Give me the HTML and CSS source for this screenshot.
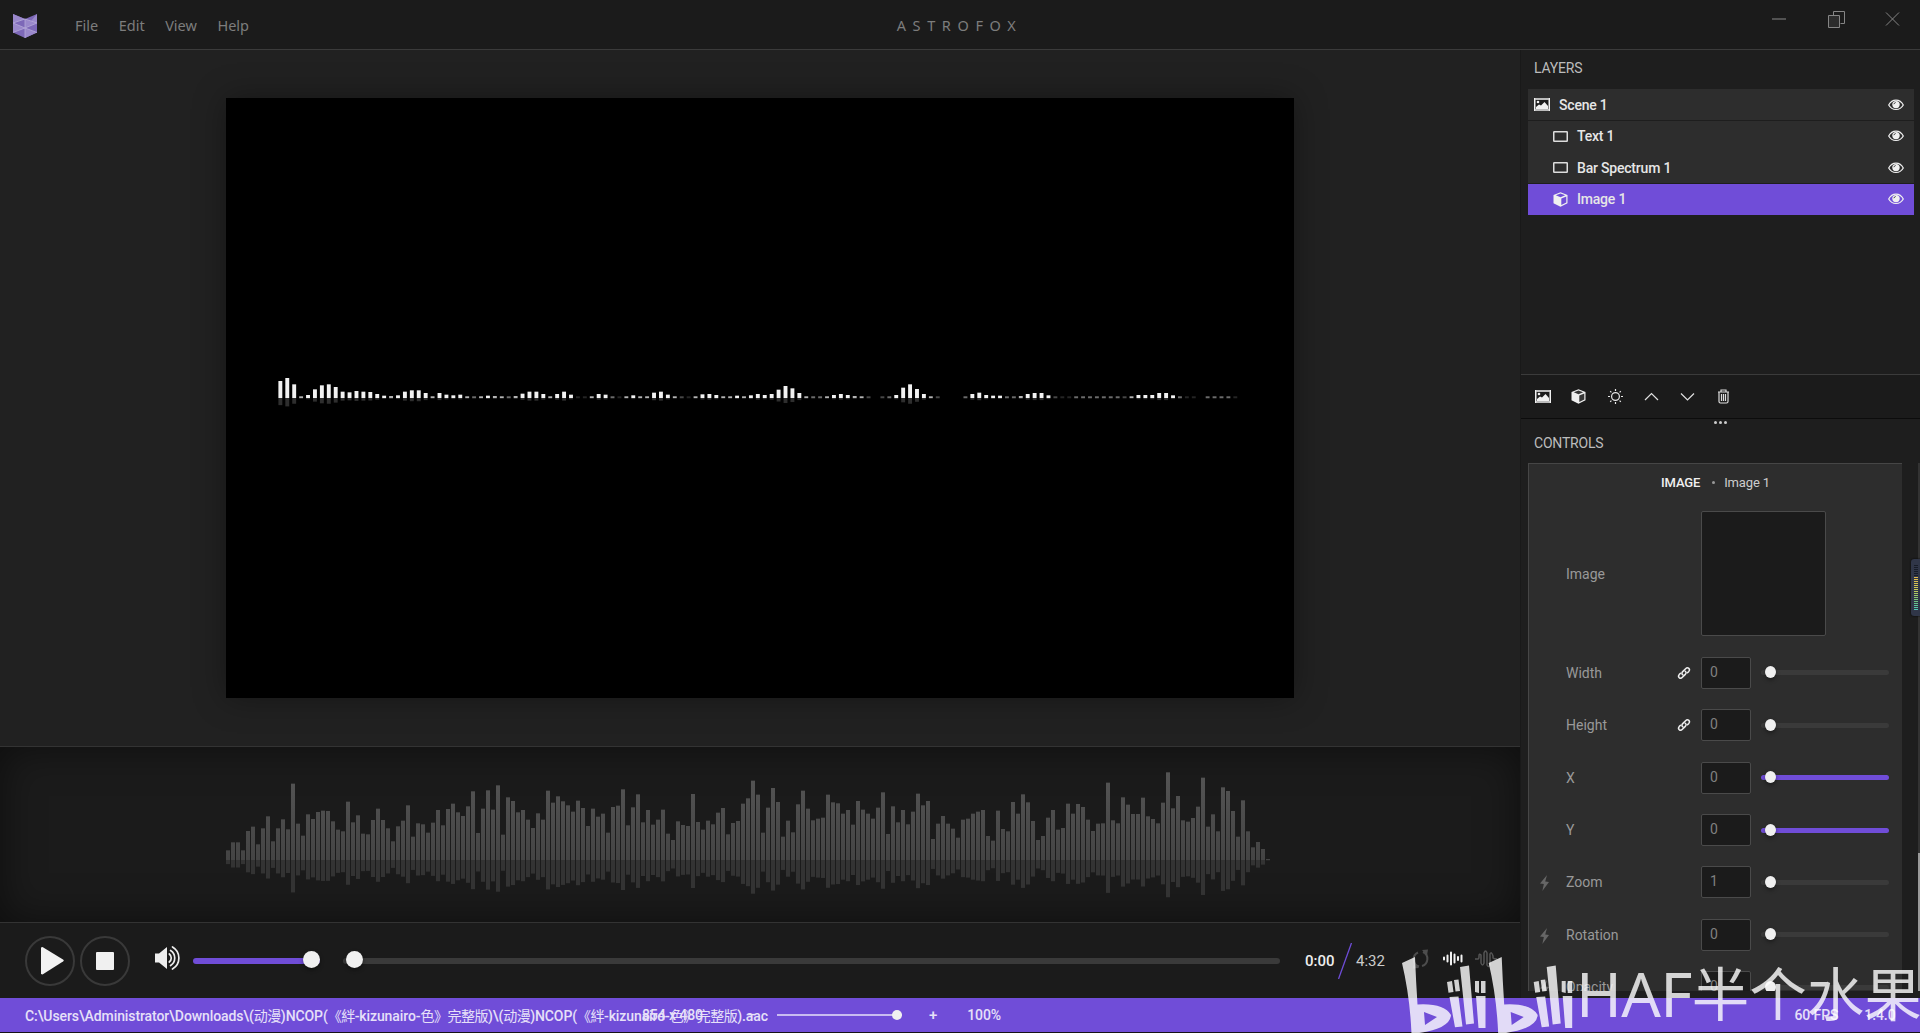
FILE: index.html
```html
<!DOCTYPE html>
<html lang="en">
<head>
<meta charset="utf-8">
<title>Astrofox</title>
<link rel="stylesheet" href="styles.css">
</head>
<body>
<svg class="defs" aria-hidden="true">
  <symbol id="picture" viewBox="0 0 16 13"><path fill="#bbb" d="M0 0h16v13H0z"/><path fill="#1c1c1c" d="M1.5 2h13v9h-13z"/><path fill="#f0f0f0" d="M0 0h1.2v13H0zM14.8 0H16v13h-1.200zM2 11V9l3-2.500 2 1L10.500 4 14 8v3z"/><circle cx="4" cy="4" r="1.300" fill="#f0f0f0"/></symbol>
  <symbol id="cube" viewBox="0 0 15 15"><path fill="#f0f0f0" d="M7.500.3 14.500 3v8.300L7.500 14.700.500 11.300V3z"/><path fill="#222" d="m7.500 1.500 4.700 1.800-4.700 1.900-4.700-1.900zM8.300 6.500 13.300 4.500v6.100l-5 2.500z" opacity=".9"/></symbol>
  <symbol id="cube-active" viewBox="0 0 15 15"><path fill="#f0f0f0" fill-rule="evenodd" d="M7.500.3 14.500 3v8.300L7.500 14.700.500 11.300V3zM7.500 1.500 2.800 3.300l4.700 1.900 4.700-1.900zM8.300 6.500v6.600l5-2.500V4.500z"/></symbol>
  <symbol id="rect" viewBox="0 0 15 11"><rect x=".75" y=".75" width="13.500" height="9.500" rx=".5" fill="none" stroke="#ddd" stroke-width="1.500"/></symbol>
  <symbol id="eye" viewBox="0 0 16 12"><path d="M.7 6C4-.5 12-.5 15.300 6 12 12 4 12 .7 6z" fill="none" stroke="#f0f0f0" stroke-width="1.200"/><circle cx="8" cy="5.600" r="3.700" fill="#f0f0f0"/><path d="M5.900 5.200Q6.200 3.700 7.700 3.500" stroke="#444" fill="none"/></symbol>
  <symbol id="link" viewBox="0 0 14 14"><g fill="none" stroke="#eee" stroke-width="1.500" stroke-linecap="round" stroke-linejoin="round"><path d="M6 9C4.600 8 4.600 6.700 5.700 5.600l2.900-2.900c1-1 2.300-1.100 3.200-.3.900.9.800 2.200-.1 3.200l-1.200 1.100"/><path d="M8 5c1.400 1 1.400 2.300.3 3.400l-2.900 2.900c-1 1-2.300 1.100-3.200.3-.9-.9-.8-2.200.1-3.200l1.200-1.100"/></g></symbol>
  <symbol id="bolt" viewBox="0 0 10 18"><path fill="#666" d="M7.800 0 0 9.500l4.300.6L2.600 18 10 8 5.800 7.300z"/></symbol>
</svg>
<div class="app">
  <header class="titlebar">
    <svg class="logo" viewBox="0 0 24 24"><path fill="#7d68b8" d="M0 0 12 5 24 0v18.500L12 24 0 18.500z"/><path fill="#9a88cb" d="M0 0 12 5 0 9zM0 9l12 5-12 4.500zM12 5l12 4-12 5zM24 0v9l-6-2zM12 24V14l12 4.500z"/><path fill="none" stroke="#b5a9d8" stroke-width=".8" d="m0 9 12-4v19M0 9l12 5 12-5-12-4M0 18.500 12 14l12 4.500"/></svg>
    <nav class="menu"><span>File</span><span>Edit</span><span>View</span><span>Help</span></nav>
    <div class="app-name">ASTROFOX</div>
    <svg class="window-buttons" viewBox="0 0 130 20" fill="none" stroke="#858585"><path d="M0 10h14" stroke="#666" stroke-width="1.500"/><path d="M61.500 6.500v-4h11v12h-4"/><path d="M56.500 6.500h11v12h-11z" fill="#2c2c2c"/><path d="m114 3.500 13 13m0-13-13 13"/></svg>
  </header>
  <div class="workspace">
    <main class="main">
      <section class="stage"><svg id="spectrum" class="canvas" viewBox="0 0 1068 600"></svg></section>
      <section class="waveform"><svg id="wave" viewBox="0 0 1068 130"><defs><linearGradient id="bars" x1="0" y1="0" x2="0" y2="92" gradientUnits="userSpaceOnUse"><stop offset="0" stop-color="#555"/><stop offset="1" stop-color="#444"/></linearGradient></defs></svg></section>
      <section class="player">
        <div class="round"><svg viewBox="0 0 23 28"><path fill="#f2f2f2" d="M0 .5 1.500 0 22 12.500q1.500 1 0 2L1.500 27.500 0 27z"/></svg></div>
        <div class="round"><i class="stop"></i></div>
        <svg class="speaker" viewBox="0 0 25 24"><path fill="#eee" d="M0 7.500h4L12 1v22l-8-6.500H0z"/><g fill="none" stroke="#eee" stroke-width="1.700" stroke-linecap="round"><path d="M14.300 8c2.600 2 2.600 6 0 8M15.600 4.500c5.500 3.500 5.500 11.500 0 15M17.500 1c8.500 5 8.500 17 0 22"/></g></svg>
        <div class="slider volume"><i></i></div>
        <div class="slider progress"><i></i></div>
        <div class="time">0:00</div>
        <svg class="slash" viewBox="0 0 14 36"><path d="M.5 36 13.500 0" stroke="#6f4dd8" stroke-width="1.300"/></svg>
        <div class="time total">4:32</div>
        <svg class="toggles" viewBox="0 0 86 20" fill="none"><g stroke="#4d4d4d" stroke-width="2"><path d="M7 17.500A7.500 7.500 0 0 1 6 3.500M11 3a7.500 7.500 0 0 1-1 14"/><path fill="#4d4d4d" stroke="none" d="m10 1 6-.5-1 6zM7 19l-6 .5 1-6z"/></g><path stroke="#f2f2f2" stroke-width="2" stroke-linecap="round" d="M32 8.500v2M35.500 6.500v6M39 3.500v12M42.500 5.500v8M46 8v3M49.500 6.500v6"/><path stroke="#555" stroke-width="1.500" d="M63 10h3q1 0 1-3t2-1v8q1.500 4 3 0V4q1.500-4 3 0v12q1.500 3 3 0V5q1.500-3 3 2v2q1 1 4 1"/></svg>
      </section>
    </main>
    <aside class="side">
      <h2>LAYERS</h2>
      <div class="layers">
        <div class="layer"><svg class="i-pic"><use href="#picture"/></svg><span>Scene 1</span><svg class="i-eye"><use href="#eye"/></svg></div>
        <div class="layer child"><svg class="i-rect"><use href="#rect"/></svg><span>Text 1</span><svg class="i-eye"><use href="#eye"/></svg></div>
        <div class="layer child"><svg class="i-rect"><use href="#rect"/></svg><span>Bar Spectrum 1</span><svg class="i-eye"><use href="#eye"/></svg></div>
        <div class="layer child active"><svg class="i-cube"><use href="#cube-active"/></svg><span>Image 1</span><svg class="i-eye"><use href="#eye"/></svg></div>
      </div>
      <div class="layer-tools">
        <svg class="i-pic"><use href="#picture"/></svg>
        <svg class="i-cube"><use href="#cube"/></svg>
        <svg class="i-tool" viewBox="0 0 15 15" fill="none" stroke="#e8e8e8" stroke-width="1.200"><circle cx="7.500" cy="7.500" r="3.900"/><path d="M7.500 0v2M7.500 13v2M0 7.500h2M13 7.500h2M2.200 2.200l1.200 1.200M11.600 11.600l1.200 1.200M12.800 2.200l-1.200 1.200M3.400 11.600l-1.200 1.200"/></svg>
        <svg class="i-tool" viewBox="0 0 15 15" fill="none" stroke="#e0e0e0" stroke-width="1.200"><path d="m1 11 6.500-6.500L14 11"/></svg>
        <svg class="i-tool" viewBox="0 0 15 15" fill="none" stroke="#e0e0e0" stroke-width="1.200"><path d="m1 4.500 6.500 6.500L14 4.500"/></svg>
        <svg class="i-tool" viewBox="0 0 15 15" fill="none" stroke="#ddd" stroke-width="1.200"><path d="M2 3h11M5 3V1h5v2M3 3v9.500q0 1.500 1.500 1.500h6q1.500 0 1.500-1.500V3M5.500 5v7M7.500 5v7M9.500 5v7"/></svg>
      </div>
      <div class="grip"><i></i><i></i><i></i></div>
      <h2 class="controls-title">CONTROLS</h2>
      <div class="controls">
        <div class="panel">
          <div class="panel-head"><b>IMAGE</b><i></i><span>Image 1</span></div>
          <div class="row image-row"><label>Image</label><div class="image-box"></div></div>
          <div class="row"><label>Width</label><svg class="link"><use href="#link"/></svg><div class="num">0</div><div class="slider small"><i></i></div></div>
          <div class="row"><label>Height</label><svg class="link"><use href="#link"/></svg><div class="num">0</div><div class="slider small"><i></i></div></div>
          <div class="row"><label>X</label><div class="num">0</div><div class="slider small full"><i></i></div></div>
          <div class="row"><label>Y</label><div class="num">0</div><div class="slider small full"><i></i></div></div>
          <div class="row"><svg class="bolt"><use href="#bolt"/></svg><label>Zoom</label><div class="num">1</div><div class="slider small"><i></i></div></div>
          <div class="row"><svg class="bolt"><use href="#bolt"/></svg><label>Rotation</label><div class="num">0</div><div class="slider small"><i></i></div></div>
          <div class="row"><svg class="bolt"><use href="#bolt"/></svg><label>Opacity</label><div class="num">0</div><div class="slider small"><i></i></div></div>
        </div>
        <div class="scroll"><i></i></div>
      </div>
    </aside>
  </div>
  <footer class="status">
    <div class="path">C:\Users\Administrator\Downloads\(<span>动漫</span>)NCOP(<span>《絆</span>-kizunairo-<span>色》完整版</span>)\(<span>动漫</span>)NCOP(<span>《絆</span>-kizunairo-<span>色》完整版</span>).aac</div>
    <div class="view"><span class="dims">854 x 480</span><span class="minus">–</span><div class="zoom"><i></i></div><span class="plus">+</span><span class="percent">100%</span></div>
    <div class="info"><span>60 FPS</span><span>1.4.0</span></div>
  </footer>
</div>
<div class="meter"><i></i></div>
<div class="watermark">
  <svg class="bili" viewBox="0 0 174 78" fill="#fff"><defs><g id="bili"><path fill-rule="evenodd" d="M0 6 13 0Q14 25 15.500 47.500 42 46 49 58 48 73 9.500 77 8 40 0 6zM22 55l1 13 12-8z"/><path d="m45 25 5-1 1.500 11-5 .8zM52 23l4.500-.5L58 34l-4.500.5zM47.500 40l9-.5 4 30-7.500.8zM58 10l9-1.500 5 58-8 1zM73 24h4v12l-4-1zM79 24h4.500v12H79zM74 39h9.500v32h-7z"/></g></defs><use href="#bili"/><use href="#bili" x="86.700"/></svg>
  <span class="latin">HAF</span><span class="han">半个水果</span>
</div>
<script src="script.js"></script>
</body>
</html>
```
FILE: styles.css
```css
* { box-sizing: border-box; }
body { margin: 0; width: 1920px; height: 1033px; overflow: hidden; position: relative; background: #161217; color: #ddd; font: 14px Roboto, "Noto Sans CJK SC", sans-serif; }
svg { display: block; flex: none; }
.defs { position: absolute; width: 0; height: 0; }
.app { height: 1032px; display: flex; flex-direction: column; }

.titlebar { flex: none; height: 50px; background: #1b1b1b; border-bottom: 1px solid #3b3b3b; display: grid; grid-template-columns: 75px 1fr auto 1fr; align-items: center; }
.logo { width: 24px; height: 24px; margin: 2px 0 0 13px; }
.menu { display: flex; gap: 20.500px; font: 14.500px "Noto Sans", sans-serif; color: #7d7d7d; }
.app-name { font: 14.500px "Noto Sans", sans-serif; letter-spacing: 6.600px; color: #7d7d7d; transform: translateX(-38px); }
.window-buttons { width: 130px; height: 20px; justify-self: end; margin: -12px 18px 0 0; }

.workspace { flex: 1; min-height: 0; display: flex; }
.main { width: 1520px; display: flex; flex-direction: column; }
.stage { flex: 1; display: flex; justify-content: center; align-items: center; background: #212121; }
.canvas { width: 1068px; height: 600px; background: #000; box-shadow: 0 0 30px rgba(0,0,0,.35); }
.waveform { height: 176px; background: #1b1b1b; border-top: 1px solid #333; box-shadow: inset 0 0 40px rgba(0,0,0,.5); padding: 21px 0 0 226px; }
.waveform svg { width: 1068px; height: 130px; }
.player { height: 76px; background: #1b1b1b; border-top: 1px solid #333; display: flex; align-items: center; padding-left: 25px; }
.round { width: 50px; height: 50px; border: 2px solid #393939; border-radius: 50%; margin-right: 5px; display: flex; align-items: center; justify-content: center; }
.round svg { width: 23px; height: 28px; margin-left: 5px; }
.stop { width: 18px; height: 18px; background: #f0f0f0; border-radius: 1px; }
.speaker { width: 25px; height: 24px; margin: -5px 13px 0 20px; }
.slider { height: 6px; border-radius: 3px; background: #3a3a3a; display: flex; align-items: center; flex: none; }
.slider i { width: 17px; height: 17px; border-radius: 50%; background: #f0f0f0; box-shadow: 0 2px 4px rgba(0,0,0,.4); position: relative; top: -1px; }
.volume { width: 127px; background: #704dd8; justify-content: flex-end; }
.progress { width: 937px; margin-left: 23px; padding-left: 3px; }
.time { margin-left: 25px; width: 31px; font-size: 15px; font-weight: 500; color: #eee; white-space: nowrap; }
.slash { width: 14px; height: 36px; margin-left: 2px; }
.time.total { margin-left: 4px; font-weight: 400; color: #ccc; }
.toggles { width: 86px; height: 20px; margin: -4px 0 0 25px; }

.side { flex: 1; background: #1e1e1e; border-left: 1px solid #191919; display: flex; flex-direction: column; }
h2 { margin: 0; height: 39px; padding: 10px 0 0 13px; font-size: 14px; line-height: 17px; font-weight: 400; color: #bcbcbc; letter-spacing: -.2px; }
.layers { height: 285px; padding: 0 6px 0 7px; }
.layer { height: 31px; margin-bottom: .600px; background: #2d2d2d; display: flex; align-items: center; padding: 0 10px 0 6px; font-weight: 500; color: #e6e6e6; letter-spacing: -.2px; }
.layer span { flex: 1; margin-left: 9px; }
.child { padding-left: 25px; }
.active { background: #704dd8; }
.i-pic { width: 16px; height: 13px; }
.i-rect { width: 15px; height: 11px; }
.i-cube { width: 15px; height: 15px; }
.i-eye { width: 16px; height: 12px; }
.i-tool { width: 15px; height: 15px; }
.layer-tools { height: 45px; background: #1b1b1b; border-top: 1px solid #3b3b3b; border-bottom: 1px solid #0c0c0c; display: flex; align-items: center; gap: 21px; padding-left: 13.500px; }
.layer-tools .i-cube { margin: 0 .500px 0 -.500px; }
.grip { height: 5px; display: flex; justify-content: center; align-items: end; gap: 2px; }
.grip i { width: 3px; height: 3px; border-radius: 50%; background: #ccc; }
.controls-title { height: 39px; padding-top: 11px; }
.controls { height: 528px; display: flex; justify-content: space-between; padding-left: 7px; }
.panel { width: 374px; overflow: hidden; background: #2d2d2d; border: 1px solid #464646; border-width: 1px 0 0 1px; }
.panel-head { height: 37px; display: flex; justify-content: center; align-items: center; font-size: 13px; letter-spacing: -.15px; color: #ccc; }
.panel-head b { font-weight: 500; color: #f0f0f0; }
.panel-head i { width: 3px; height: 3px; border-radius: 50%; background: #999; margin: 0 9px 0 12px; }
.row { height: 52.450px; display: grid; grid-template-columns: 37px 111px 24px 50px 138px; align-items: center; }
.row > * { grid-row: 1; }
.row label { grid-column: 2; color: #999; }
.link { grid-column: 3; width: 14px; height: 14px; margin-left: -.500px; }
.num { grid-column: 4; height: 32px; border: 1px solid #4a4a4a; border-radius: 2px; background: #1b1b1b; color: #808080; padding: 6px 8px; line-height: 17px; }
.bolt { grid-column: 1; width: 9px; height: 18px; margin: 2px 0 0 11px; }
.image-row { height: 145.500px; }
.image-box { grid-column: 4; width: 125px; height: 125px; border: 1px solid #4a4a4a; border-radius: 2px; background: #1b1b1b; }
.small { grid-column: 5; width: 128px; height: 5px; margin-left: 10px; padding-left: 3.500px; }
.small i { width: 11px; height: 12px; top: -.5px; }
.full { background: #704dd8; }
.scroll { width: 2px; background: #333; padding-top: 390px; }
.scroll i { display: block; height: 138px; background: #9a9a9a; }

.status { flex: none; height: 34px; background: #704dd8; display: grid; grid-template-columns: 642px 1fr auto; align-items: center; color: #e6e0f8; letter-spacing: -.1px; white-space: nowrap; font-weight: 500; padding-bottom: 1px; }
.path { padding-left: 25px; text-spacing-trim: space-all; }
.path span { letter-spacing: -.500px; font-weight: 400; }
.view { display: flex; align-items: center; }
.dims { width: 105px; }
.minus { width: 30px; }
.zoom { width: 125px; height: 2px; background: #c9bcf1; display: flex; align-items: center; justify-content: flex-end; }
.zoom i { width: 10px; height: 10px; border-radius: 50%; background: #f0f0f0; }
.plus { margin-left: 27px; font-size: 15px; }
.percent { margin-left: 30px; }
.info { display: flex; gap: 26px; padding-right: 24.500px; }

.meter { position: absolute; left: 1911px; top: 559px; width: 12px; height: 57px; border-radius: 3px; background: #303648; box-shadow: 0 0 2px #000; padding: 6px 0 0 3px; }
.meter i { display: block; width: 4px; height: 45px; background: repeating-linear-gradient(transparent 0 1px, #303648 1px 2px), linear-gradient(#171c28 0 12px, #e3b94b 12px, #c8cc57 25px, #70c57e 36px, #4fc9b6); }
.watermark { position: absolute; left: 1402px; top: 957px; height: 76px; display: flex; color: #fff; opacity: .8; white-space: nowrap; }
.bili { width: 174px; height: 78px; }
.latin { font: 62px/72px "Noto Sans", sans-serif; letter-spacing: -.700px; }
.han { font: 57.500px/68px "Noto Sans CJK SC", sans-serif; }
```
FILE: script.js
```js
const NS = 'http://www.w3.org/2000/svg';

function bar(parent, x, y, width, height, fill, opacity) {
  const rect = document.createElementNS(NS, 'rect');
  Object.entries({ x, y, width, height, fill, opacity }).forEach(([k, v]) => rect.setAttribute(k, v));
  parent.appendChild(rect);
}

// Waveform levels, in thirds of a pixel
const levels = [29,53,53,29,87,100,47,95,131,56,95,122,92,229,109,73,137,123,144,148,147,116,91,86,175,113,134,79,77,120,154,120,95,56,101,118,164,70,110,107,82,112,150,104,153,169,143,132,161,206,81,154,209,151,224,76,188,177,143,150,121,96,140,121,208,172,191,176,164,145,178,156,102,154,130,139,82,159,163,212,104,158,197,113,150,106,121,151,79,60,116,105,102,198,114,91,118,107,142,156,77,111,117,169,185,238,196,82,157,216,174,70,118,83,167,208,154,119,124,127,196,173,170,139,150,106,177,151,139,124,157,203,78,161,113,150,107,145,199,164,177,63,109,132,109,94,67,121,124,139,145,150,72,58,148,93,86,174,139,197,173,117,60,72,127,150,91,96,169,139,168,159,121,87,109,110,232,119,110,188,166,138,138,187,131,123,110,172,263,155,192,119,115,126,160,247,100,137,86,218,207,147,70,179,86,38,54,33,3];
const wave = document.getElementById('wave');
levels.forEach((v, i) => {
  const h = v / 3;
  bar(wave, i * 5, 92 - h, 4, h, 'url(#bars)', 1);
  bar(wave, i * 5, 92, 4, h * 0.425, '#333', 1);
});

// Spectrum levels, same units; values below 4 are drawn faint
const bins = [51,60,41,5,9,26,38,41,33,19,17,21,19,18,12,7,6,8,19,23,23,15,4,15,10,8,10,4,3,4,7,6,4,3,6,13,19,19,12,4,12,19,10,1,1,4,12,10,3,1,4,8,5,4,16,19,10,4,2,1,4,11,12,9,4,5,7,4,8,12,9,12,25,36,29,15,4,3,3,4,9,12,9,6,4,2,0,2,3,9,31,41,27,12,4,2,0,0,0,3,12,16,9,7,7,3,3,6,12,15,15,8,2,1,1,3,3,3,3,3,3,3,2,4,9,9,9,15,15,8,3,1,1,0,3,3,3,3,1];
const spectrum = document.getElementById('spectrum');
bins.forEach((v, i) => {
  if (!v) return;
  const x = 52.4 + i * 6.92;
  const h = Math.max(v / 3, 1.7);
  bar(spectrum, x, 300 - h, 3.900, h, '#fff', v < 4 ? v * 0.14 : v < 7 ? 0.7 : 0.95);
  bar(spectrum, x, 300, 3.900, h * 0.42, '#fff', v < 4 ? v * 0.05 : 0.18);
});
```
